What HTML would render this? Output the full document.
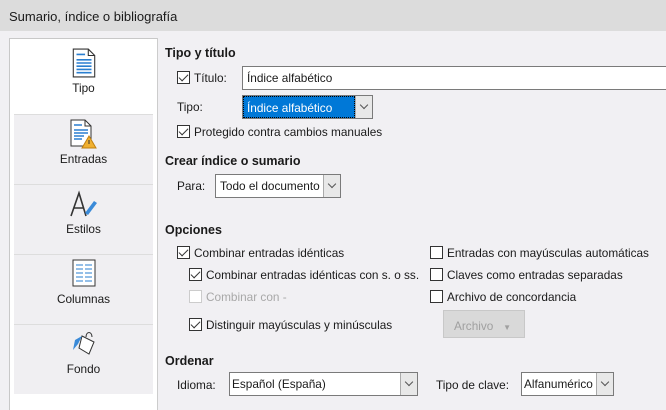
<!DOCTYPE html><html><head><style>
*{margin:0;padding:0;box-sizing:border-box}
body{width:666px;height:410px;overflow:hidden;background:#f1f0f3;font-family:"Liberation Sans",sans-serif;font-size:11.8px;color:#1a1a1a;position:relative}
.a{position:absolute;white-space:nowrap}
.t{top:0;left:0;width:666px;height:31px;background:#dcdcdc;font-size:13px;padding:9px 0 0 9px}
.h{font-weight:bold;font-size:12.5px}
.cb{position:absolute;width:13px;height:13px;border:1px solid #333;background:#fff}
.cb.c::after{content:"";position:absolute;left:3px;top:0px;width:4px;height:8px;border:solid #333;border-width:0 1.5px 1.5px 0;transform:rotate(45deg)}
.cb.d{border-color:#ccc}
.in{position:absolute;background:#fff;border:1px solid #7a7a7a;padding:4px 0 0 4px}
.btn{position:absolute;border-left:1px solid #aaa;background:#e8e8e8;top:0;bottom:0;right:0;width:17px}
.btn::after{content:"";position:absolute;left:5px;top:6px;width:5px;height:5px;border:solid #555;border-width:0 1px 1px 0;transform:rotate(45deg)}
.tab{position:absolute;left:14px;width:139px;height:70px;text-align:center;border-top:1px solid #ddd}
.tab span{position:absolute;left:0;right:0;top:37px}
</style></head><body>
<div class="a t">Sumario, índice o bibliografía</div>
<div class="a" style="left:9px;top:38px;width:149px;height:372px;border:1px solid #c8c8c8;border-bottom:none;background:#fff"></div>
<div class="tab" style="top:44px;background:#fff;border-top:none"><svg style="margin-top:4px" width="24" height="30" viewBox="0 0 22 28"><path d="M1 1h14l6 6v20H1z" fill="#fff" stroke="#333"/><path d="M15 1v6h6" fill="none" stroke="#333"/><path d="M4 6h8M4 11h14M4 14h14M4 17h14M4 20h14M4 23h14" stroke="#2a7fd0" stroke-width="1.5"/></svg><span>Tipo</span></div>
<div class="tab" style="top:114px;background:#f0eff2"><svg style="margin-top:4px" width="28" height="30" viewBox="0 0 28 30"><path d="M1 1h14l6 6v20H1z" fill="#fff" stroke="#333"/><path d="M15 1v6h6" fill="none" stroke="#333"/><path d="M4 6h8M4 11h14M4 14h14M4 17h10M4 20h8" stroke="#2a7fd0" stroke-width="1.5"/><path d="M19 17l7 12H12z" fill="#f0b030" stroke="#c08010"/><path d="M19 21v4" stroke="#333"/></svg><span>Entradas</span></div>
<div class="tab" style="top:184px;background:#f0eff2"><svg style="margin-top:4px" width="30" height="30" viewBox="0 0 30 30"><path d="M2 27L10 4l7 23M5 19h10" fill="none" stroke="#333" stroke-width="1.6"/><path d="M16 24l9-12 3 2-9 12z" fill="#3a8ad8"/></svg><span>Estilos</span></div>
<div class="tab" style="top:254px;background:#f0eff2"><svg style="margin-top:4px" width="24" height="28" viewBox="0 0 24 28"><rect x="1" y="1" width="22" height="26" fill="#fff" stroke="#333"/><path d="M4 6h7M13 6h7M4 10h7M13 10h7M4 14h7M13 14h7M4 18h7M13 18h7M4 22h7M13 22h7" stroke="#2a7fd0"/></svg><span>Columnas</span></div>
<div class="tab" style="top:324px;background:#f0eff2;height:70px"><svg style="margin-top:5px" width="28" height="26" viewBox="0 0 28 26"><path d="M12 6l12 6-5 12-10-6z" fill="#fff" stroke="#333"/><path d="M16 7c0-6 6-6 6 0" fill="none" stroke="#333"/><path d="M3 20l2-10 7-4-4 8z" fill="#3a8ad8"/></svg><span>Fondo</span></div>
<div class="a" style="left:157px;top:38px;width:1px;height:372px;background:#ccc"></div>

<div class="a h" style="left:165px;top:46px">Tipo y título</div>
<div class="cb c" style="left:177px;top:71px"></div><div class="a" style="left:194px;top:71px">Título:</div>
<div class="in" style="left:242px;top:66px;width:430px;height:24px">Índice alfabético</div>
<div class="a" style="left:177px;top:100px">Tipo:</div>
<div class="in" style="left:242px;top:95px;width:131px;height:24px;padding:0"><div style="position:absolute;left:0;top:0;right:17px;bottom:0;background:#0078d7;color:#fff;padding:4px 0 0 3px;border:1px dotted #000">Índice alfabético</div><div class="btn"></div></div>
<div class="cb c" style="left:177px;top:125px"></div><div class="a" style="left:194px;top:125px">Protegido contra cambios manuales</div>

<div class="a h" style="left:165px;top:154px">Crear índice o sumario</div>
<div class="a" style="left:177px;top:179px">Para:</div>
<div class="in" style="left:215px;top:174px;width:126px;height:24px">Todo el documento<div class="btn"></div></div>

<div class="a h" style="left:165px;top:223px">Opciones</div>
<div class="cb c" style="left:177px;top:246px"></div><div class="a" style="left:194px;top:246px">Combinar entradas idénticas</div>
<div class="cb c" style="left:189px;top:268px"></div><div class="a" style="left:206px;top:268px">Combinar entradas idénticas con s. o ss.</div>
<div class="cb d" style="left:189px;top:290px"></div><div class="a" style="left:206px;top:290px;color:#a8a8a8">Combinar con -</div>
<div class="cb c" style="left:189px;top:318px"></div><div class="a" style="left:206px;top:318px">Distinguir mayúsculas y minúsculas</div>
<div class="cb" style="left:430px;top:246px"></div><div class="a" style="left:447px;top:246px">Entradas con mayúsculas automáticas</div>
<div class="cb" style="left:430px;top:268px"></div><div class="a" style="left:447px;top:268px">Claves como entradas separadas</div>
<div class="cb" style="left:430px;top:290px"></div><div class="a" style="left:447px;top:290px">Archivo de concordancia</div>
<div class="a" style="left:443px;top:310px;width:82px;height:28px;background:#d9d9d9;border:1px solid #c8c8c8;color:#a0a0a0;padding:8px 0 0 10px">Archivo &nbsp;&nbsp;<span style="font-size:8px">▼</span></div>

<div class="a h" style="left:165px;top:354px">Ordenar</div>
<div class="a" style="left:177px;top:378px">Idioma:</div>
<div class="in" style="left:229px;top:372px;width:189px;height:24px;padding-left:2px">Español (España)<div class="btn"></div></div>
<div class="a" style="left:436px;top:378px">Tipo de clave:</div>
<div class="in" style="left:521px;top:372px;width:93px;height:24px;padding-left:2px">Alfanumérico<div class="btn"></div></div>
</body></html>
